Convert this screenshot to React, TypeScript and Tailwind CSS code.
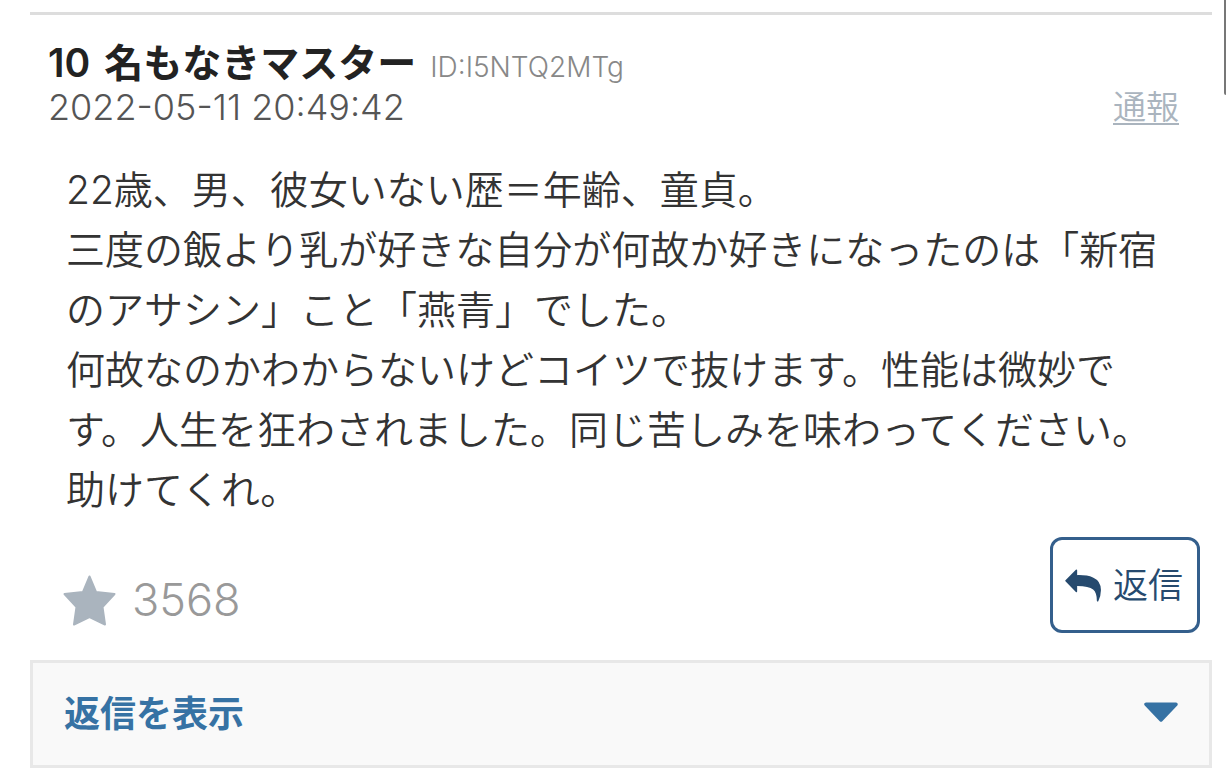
import { useState } from "react";

const comment = {
  number: 10,
  name: "名もなきマスター",
  userId: "I5NTQ2MTg",
  date: "2022-05-11 20:49:42",
  likes: 3568,
  body: [
    "22歳、男、彼女いない歴＝年齢、童貞。",
    "三度の飯より乳が好きな自分が何故か好きになったのは「新宿のアサシン」こと「燕青」でした。",
    "何故なのかわからないけどコイツで抜けます。性能は微妙です。人生を狂わされました。同じ苦しみを味わってください。助けてくれ。",
  ],
};

function StarIcon() {
  return (
    <svg viewBox="0 0 53 51" className="h-[51px] w-[53px]" aria-hidden="true">
      <path
        d="M26.5 1.5 33 17 51.5 19 39.5 32 42 49.5 26.5 42 11 49.5 13.5 32 1.5 19 20 17Z"
        fill="currentColor"
        stroke="currentColor"
        strokeWidth="2"
        strokeLinejoin="round"
      />
    </svg>
  );
}

function ReplyIcon() {
  return (
    <svg viewBox="0 0 36 33" className="h-[33px] w-9" aria-hidden="true">
      <path
        d="M1 11.8 11.4 1.4V6.9C23 6.6 35.2 8.5 35.2 21 35.2 25.5 34 29 32.6 31.8 32.6 21 29 16 11.4 16.2V22.4Z"
        fill="currentColor"
        stroke="currentColor"
        strokeWidth="1.5"
        strokeLinejoin="round"
      />
    </svg>
  );
}

function CaretIcon() {
  return (
    <svg viewBox="0 0 34 24" className="h-6 w-[34px]" aria-hidden="true">
      <path
        d="M2 2.2H32L17 18Z"
        fill="currentColor"
        stroke="currentColor"
        strokeWidth="3.5"
        strokeLinejoin="round"
      />
    </svg>
  );
}

export default function App() {
  const [open, setOpen] = useState(false);

  return (
    <main className="relative bg-white py-3 pr-3.5 pl-[30px] font-['Inter','Noto_Sans_CJK_JP',sans-serif] font-[350]">
      {/* Scroll thumb */}
      <div className="absolute top-0 right-0 h-[95px] w-0.5 rounded-bl-sm bg-[#777]" />

      <article lang="ja" className="border-t-[3px] border-[#ddd] pt-7">
        <header className="flex items-end justify-between pr-[33px] pl-[18px]">
          <div>
            <h2 className="flex items-baseline gap-3.5 text-[39px] leading-10 font-semibold text-[#222]">
              <span>{comment.number}</span>
              <span>{comment.name}</span>
              <span className="text-[28px] font-light text-[#888]">ID:{comment.userId}</span>
            </h2>
            <time className="block text-[36px] leading-10 text-[#555]">{comment.date}</time>
          </div>
          <a
            href="#report"
            className="text-[33px] leading-10 text-[#aab4be] underline decoration-2 underline-offset-4"
          >
            通報
          </a>
        </header>

        {/* Comment body */}
        <div className="mt-[33px] pr-10 pl-9 text-[39px] leading-[60px] text-[#333]">
          {comment.body.map((line) => (
            <p key={line}>{line}</p>
          ))}
        </div>

        <div className="mt-[17px] flex items-end justify-between pr-3 pl-[33px]">
          <button type="button" className="flex items-center gap-4 pb-[3px] text-[#aab4be]">
            <StarIcon />
            <span className="text-[45px] leading-[60px] text-[#999]">{comment.likes}</span>
          </button>
          <button
            type="button"
            className="flex h-24 items-center gap-3 rounded-xl border-[3px] border-[#345f8c] px-3 text-[35px] text-[#264a6e]"
          >
            <ReplyIcon />
            <span className="pr-0.5">返信</span>
          </button>
        </div>

        {/* Replies toggle */}
        <button
          type="button"
          aria-expanded={open}
          onClick={() => setOpen(!open)}
          className="mt-[27px] flex h-[108px] w-full items-center justify-between border-[3px] border-[#e8e8e8] bg-[#f9f9f9] px-[31px] text-[36px] font-bold text-[#3672a4]"
        >
          返信を表示
          <CaretIcon />
        </button>
      </article>
    </main>
  );
}
